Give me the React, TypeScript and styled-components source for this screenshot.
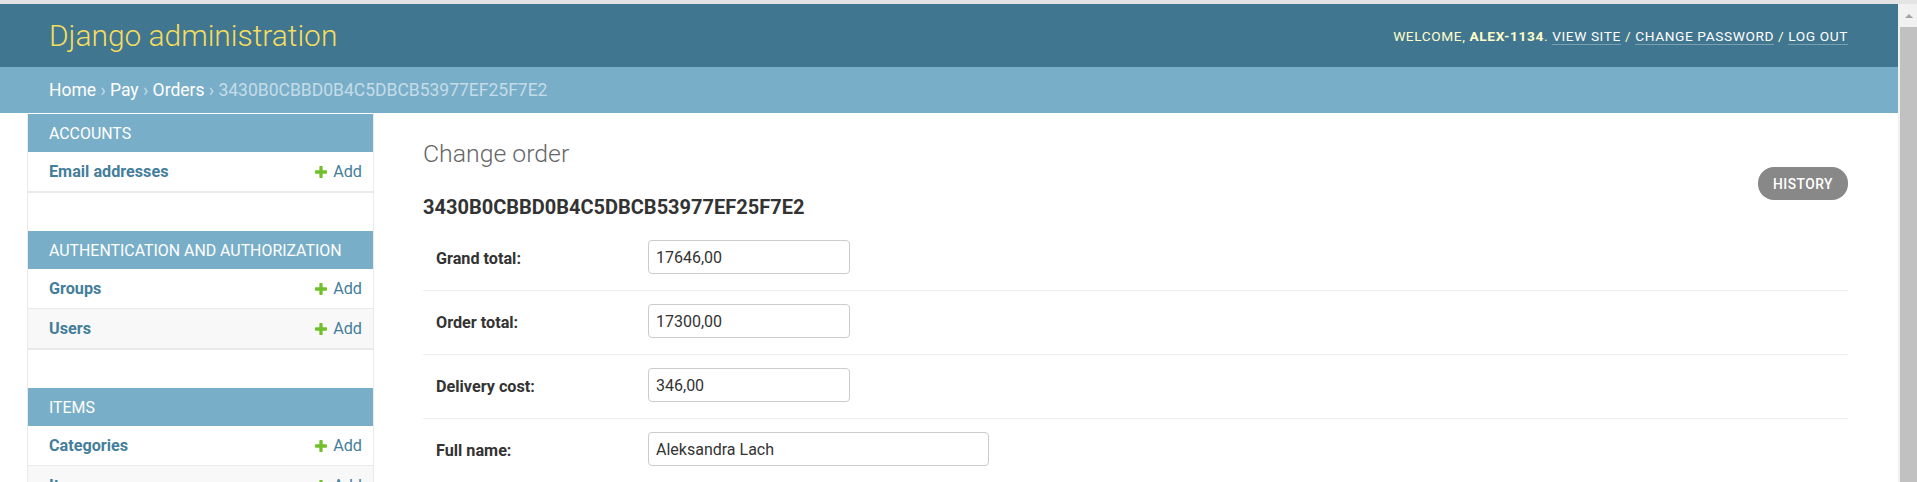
import React from "react";
import styled, { createGlobalStyle } from "styled-components";

const GlobalStyle = createGlobalStyle`
  html, body { margin: 0; padding: 0; height: 100%; overflow: hidden; background: #fff; }
  body { font-family: Roboto, "Liberation Sans", Arial, sans-serif; color: #333; }
  *, *::before, *::after { box-sizing: border-box; }
`;

const Screen = styled.div`
  display: flex;
  flex-direction: column;
  height: 100vh;
  overflow: hidden;
`;

const TopStrip = styled.div`
  flex: 0 0 4px;
  background: #e4e4e4;
`;

const Window = styled.div`
  display: flex;
  flex: 1;
  min-height: 0;
`;

const Page = styled.div`
  flex: 1;
  min-width: 0;
  display: flex;
  flex-direction: column;
`;

const Header = styled.header`
  display: flex;
  align-items: center;
  justify-content: space-between;
  flex: 0 0 63px;
  padding: 0 50px 0 49px;
  background: #417690;
  color: #ffc;
`;

const Branding = styled.h1`
  margin: 0;
  font-weight: 300;
  font-size: 29.9px;
  line-height: 1;
  color: #f5dd5d;
`;

const UserTools = styled.div`
  font-size: 13.7px;
  font-weight: 400;
  letter-spacing: 0.6px;
  text-transform: uppercase;
  color: #ffc;
`;

const UserName = styled.strong`
  font-weight: 700;
`;

const ToolLink = styled.a`
  color: #fff;
  text-decoration: none;
  border-bottom: 1px solid rgba(255, 255, 255, 0.3);
`;

const Breadcrumbs = styled.nav`
  display: flex;
  align-items: center;
  flex: 0 0 46px;
  padding: 0 49px;
  background: #79aec8;
  color: #c4dce8;
  font-size: 17.5px;
  white-space: pre;
`;

const Crumb = styled.a`
  color: #fff;
  text-decoration: none;
`;

const Main = styled.div`
  display: flex;
  flex: 1;
  min-height: 0;
`;

const Toggle = styled.div`
  flex: 0 0 28px;
  border-right: 1px solid #eaeaea;
`;

const Sidebar = styled.nav`
  flex: 0 0 346px;
  border-right: 1px solid #eaeaea;
  padding-top: 1px;
`;

const Module = styled.div`
  margin-bottom: 38px;
  border-bottom: 1px solid #eaeaea;
`;

const Caption = styled.div`
  height: 38px;
  display: flex;
  align-items: center;
  padding-left: 21px;
  background: #79aec8;
  color: #fff;
  font-size: 15.9px;
  text-transform: uppercase;
`;

const ModelRow = styled.div<{ $alt?: boolean }>`
  height: 40px;
  display: flex;
  align-items: center;
  justify-content: space-between;
  padding: 0 11px 0 21px;
  border-bottom: 1px solid #eaeaea;
  background: ${(p) => (p.$alt ? "#f8f8f8" : "#fff")};
  font-size: 16.2px;
`;

const ModelName = styled.a`
  color: #447e9b;
  font-weight: 700;
  text-decoration: none;
`;

const AddLink = styled.a`
  display: flex;
  align-items: center;
  gap: 6px;
  color: #447e9b;
  text-decoration: none;
`;

const Content = styled.main`
  flex: 1;
  min-width: 0;
  padding: 26px 50px 0 49px;
`;

const Title = styled.h1`
  margin: 0;
  font-size: 24.8px;
  line-height: 29px;
  font-weight: 300;
  color: #666;
`;

const TitleRow = styled.div`
  display: flex;
  justify-content: space-between;
  align-items: flex-start;
`;

const ObjectName = styled.h2`
  margin: 27px 0 0;
  font-size: 20px;
  line-height: 24px;
  font-weight: 700;
  color: #333;
`;

const HistoryButton = styled.a`
  display: flex;
  align-items: center;
  height: 33px;
  margin-top: -1px;
  padding: 0 15px;
  border-radius: 16px;
  background: #888;
  color: #fff;
  font-size: 13.8px;
  font-weight: 500;
  letter-spacing: 0.5px;
  text-transform: uppercase;
  text-decoration: none;
`;

const Fieldset = styled.div`
  margin-top: 8px;
`;

const FormRow = styled.div`
  height: 64px;
  display: flex;
  align-items: flex-start;
  padding-top: 13px;
  border-bottom: 1px solid #eee;
`;

const Label = styled.label`
  flex: 0 0 225px;
  padding: 9px 0 0 13px;
  font-size: 16.2px;
  font-weight: 700;
  color: #333;
`;

const TextInput = styled.input<{ $width: number }>`
  width: ${(p) => p.$width}px;
  height: 34px;
  padding: 0 7px;
  border: 1px solid #ccc;
  border-radius: 4px;
  font-family: Roboto, "Liberation Sans", Arial, sans-serif;
  font-size: 16px;
  color: #333;
  background: #fff;
  outline: none;
`;

const Scrollbar = styled.div`
  flex: 0 0 19px;
  display: flex;
  flex-direction: column;
  align-items: flex-end;
  background: #f1f1f1;
`;

const ScrollArrow = styled.div`
  flex: 0 0 23px;
  width: 17px;
  display: flex;
  align-items: center;
  justify-content: center;
  &::before {
    content: "";
    border-left: 4px solid transparent;
    border-right: 4px solid transparent;
    border-bottom: 4px solid #a3a3a3;
  }
`;

const Thumb = styled.div`
  flex: 1;
  width: 17px;
  background: #c1c1c1;
`;

const PlusIcon = () => (
  <svg width="12" height="12" viewBox="190 186 1412 1412" aria-hidden="true">
    <path
      fill="#70bf2b"
      d="M1600 796v192q0 40-28 68t-68 28h-416v416q0 40-28 68t-68 28h-192q-40 0-68-28t-28-68v-416h-416q-40 0-68-28t-28-68v-192q0-40 28-68t68-28h416v-416q0-40 28-68t68-28h192q40 0 68 28t28 68v416h416q40 0 68 28t28 68z"
    />
  </svg>
);

const modules = [
  { name: "Accounts", models: ["Email addresses"] },
  { name: "Authentication and Authorization", models: ["Groups", "Users"] },
  { name: "Items", models: ["Categories", "Items"] },
];

const fields = [
  { label: "Grand total:", value: "17646,00", width: 202 },
  { label: "Order total:", value: "17300,00", width: 202 },
  { label: "Delivery cost:", value: "346,00", width: 202 },
  { label: "Full name:", value: "Aleksandra Lach", width: 341 },
  { label: "Email:", value: "", width: 341 },
];

export default function App() {
  return (
    <Screen>
      <GlobalStyle />
      <TopStrip />
      <Window>
        <Page>
          <Header>
            <Branding>Django administration</Branding>
            <UserTools>
              Welcome, <UserName>alex-1134</UserName>.{" "}
              <ToolLink href="#">View site</ToolLink> /{" "}
              <ToolLink href="#">Change password</ToolLink> /{" "}
              <ToolLink href="#">Log out</ToolLink>
            </UserTools>
          </Header>
          <Breadcrumbs>
            <Crumb href="#">Home</Crumb>
            {" › "}
            <Crumb href="#">Pay</Crumb>
            {" › "}
            <Crumb href="#">Orders</Crumb>
            {" › 3430B0CBBD0B4C5DBCB53977EF25F7E2"}
          </Breadcrumbs>
          <Main>
            <Toggle />
            <Sidebar>
              {modules.map((m) => (
                <Module key={m.name}>
                  <Caption>{m.name}</Caption>
                  {m.models.map((model, i) => (
                    <ModelRow key={model} $alt={i % 2 === 1}>
                      <ModelName href="#">{model}</ModelName>
                      <AddLink href="#">
                        <PlusIcon />
                        Add
                      </AddLink>
                    </ModelRow>
                  ))}
                </Module>
              ))}
            </Sidebar>
            <Content>
              <Title>Change order</Title>
              <TitleRow>
                <ObjectName>3430B0CBBD0B4C5DBCB53977EF25F7E2</ObjectName>
                <HistoryButton href="#">History</HistoryButton>
              </TitleRow>
              <Fieldset>
                {fields.map((f) => (
                  <FormRow key={f.label}>
                    <Label>{f.label}</Label>
                    <TextInput $width={f.width} defaultValue={f.value} readOnly />
                  </FormRow>
                ))}
              </Fieldset>
            </Content>
          </Main>
        </Page>
        <Scrollbar>
          <ScrollArrow />
          <Thumb />
        </Scrollbar>
      </Window>
    </Screen>
  );
}
